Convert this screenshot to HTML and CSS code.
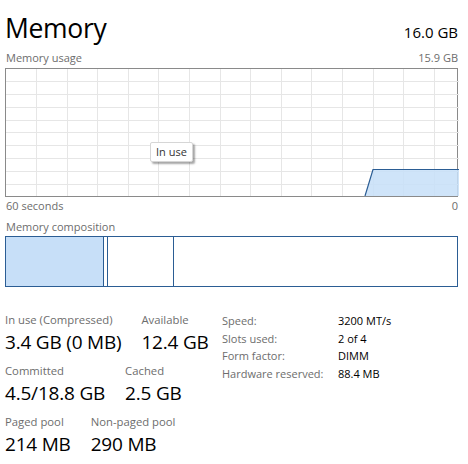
FILE: index.html
```html
<!DOCTYPE html>
<html>
  <head>
    <meta charset="utf-8" />
    <title>Memory</title>
    <link rel="stylesheet" href="styles.css">
  </head>
  <body>
    <div class="header">
      <h1>Memory</h1>
      <span class="total">16.0 GB</span>
    </div>

    <div class="caption">
      <span>Memory usage</span>
      <span>15.9 GB</span>
    </div>
    <div class="graph">
      <svg width="453" height="127" viewBox="0 0 453 127">
        <g stroke="#e6e6e6" stroke-width="1">
          <line x1="30.5" y1="0" x2="30.5" y2="127" />
          <line x1="61.5" y1="0" x2="61.5" y2="127" />
          <line x1="91.5" y1="0" x2="91.5" y2="127" />
          <line x1="122.5" y1="0" x2="122.5" y2="127" />
          <line x1="152.5" y1="0" x2="152.5" y2="127" />
          <line x1="183.5" y1="0" x2="183.5" y2="127" />
          <line x1="214.5" y1="0" x2="214.5" y2="127" />
          <line x1="244.5" y1="0" x2="244.5" y2="127" />
          <line x1="275.5" y1="0" x2="275.5" y2="127" />
          <line x1="305.5" y1="0" x2="305.5" y2="127" />
          <line x1="336.5" y1="0" x2="336.5" y2="127" />
          <line x1="367.5" y1="0" x2="367.5" y2="127" />
          <line x1="397.5" y1="0" x2="397.5" y2="127" />
          <line x1="428.5" y1="0" x2="428.5" y2="127" />
          <line x1="0" y1="12.5" x2="453" y2="12.5" />
          <line x1="0" y1="25.5" x2="453" y2="25.5" />
          <line x1="0" y1="38.5" x2="453" y2="38.5" />
          <line x1="0" y1="51.5" x2="453" y2="51.5" />
          <line x1="0" y1="63.5" x2="453" y2="63.5" />
          <line x1="0" y1="76.5" x2="453" y2="76.5" />
          <line x1="0" y1="89.5" x2="453" y2="89.5" />
          <line x1="0" y1="102.5" x2="453" y2="102.5" />
          <line x1="0" y1="115.5" x2="453" y2="115.5" />
        </g>
        <polygon points="359,127 367,100 453,100 453,127" fill="#c7dff8" fill-opacity="0.85" />
        <polyline points="359,127 367,100.5 453,100.5" fill="none" stroke="#2b5d94" stroke-width="1.2" />
      </svg>
      <div class="tooltip">In use</div>
    </div>
    <div class="caption axis">
      <span>60 seconds</span>
      <span>0</span>
    </div>

    <div class="caption">
      <span>Memory composition</span>
    </div>
    <div class="composition">
      <div class="seg in-use"></div>
      <div class="seg modified"></div>
      <div class="seg standby"></div>
      <div class="seg free"></div>
    </div>

    <div class="details">
      <div class="stats">
        <div class="row">
          <div class="stat">
            <div class="label">In use (Compressed)</div>
            <div class="value">3.4 GB (0 MB)</div>
          </div>
          <div class="stat">
            <div class="label">Available</div>
            <div class="value">12.4 GB</div>
          </div>
        </div>
        <div class="row">
          <div class="stat">
            <div class="label">Committed</div>
            <div class="value">4.5/18.8 GB</div>
          </div>
          <div class="stat">
            <div class="label">Cached</div>
            <div class="value">2.5 GB</div>
          </div>
        </div>
        <div class="row">
          <div class="stat">
            <div class="label">Paged pool</div>
            <div class="value">214 MB</div>
          </div>
          <div class="stat">
            <div class="label">Non-paged pool</div>
            <div class="value">290 MB</div>
          </div>
        </div>
      </div>

      <table class="props">
        <tr><td>Speed:</td><td>3200 MT/s</td></tr>
        <tr><td>Slots used:</td><td>2 of 4</td></tr>
        <tr><td>Form factor:</td><td>DIMM</td></tr>
        <tr><td>Hardware reserved:</td><td>88.4 MB</td></tr>
      </table>
    </div>
  </body>
</html>
```

FILE: styles.css
```css
body {
  font-family: "Open Sans", "Noto Sans", sans-serif;
  margin: 0;
  padding: 0 10px 0 5px;
  width: 453px;
  background: #fff;
  color: #000;
}
.header {
  display: flex;
  justify-content: space-between;
  align-items: baseline;
  height: 48px;
}
h1 {
  font-size: 26.5px;
  font-weight: 400;
  margin: 0;
  padding-top: 10px;
  letter-spacing: -0.3px;
}
.total {
  font-size: 15px;
}
.caption {
  display: flex;
  justify-content: space-between;
  font-size: 11px;
  color: #6d6d6d;
  height: 19px;
  line-height: 20px;
  padding-left: 1px;
}
.graph {
  position: relative;
  border: 1px solid #8a8a8a;
  height: 127px;
  margin-top: 1px;
}
.graph svg {
  display: block;
}
.tooltip {
  position: absolute;
  left: 144px;
  top: 73px;
  font-size: 11px;
  padding: 1px 5px 2px;
  background: #fff;
  border: 1px solid #d6d6d6;
  border-radius: 2px;
  box-shadow: 2px 2px 2px rgba(0, 0, 0, 0.35);
  color: #333;
}
.axis {
  height: 20px;
  line-height: 18px;
}
.composition {
  display: flex;
  border: 1px solid #2b5d94;
  height: 49px;
}
.seg {
  border-right: 1px solid #2b5d94;
}
.in-use {
  width: 97px;
  background: #c7dff8;
}
.modified {
  width: 3px;
}
.standby {
  width: 65px;
}
.free {
  flex: 1;
  border-right: none;
}
.details {
  display: flex;
  align-items: flex-start;
  margin-top: 25px;
}
.stats {
  width: 217px;
}
.row {
  display: flex;
  gap: 20px;
  margin-bottom: 7px;
}
.label {
  font-size: 11.3px;
  color: #6d6d6d;
  line-height: 16px;
}
.value {
  font-size: 19px;
  line-height: 28px;
  letter-spacing: -0.2px;
}
.props {
  border-collapse: collapse;
  font-size: 11px;
}
.props td {
  padding: 0;
  height: 17.7px;
  line-height: 16px;
}
.props td:first-child {
  color: #6d6d6d;
  width: 116px;
}
```
